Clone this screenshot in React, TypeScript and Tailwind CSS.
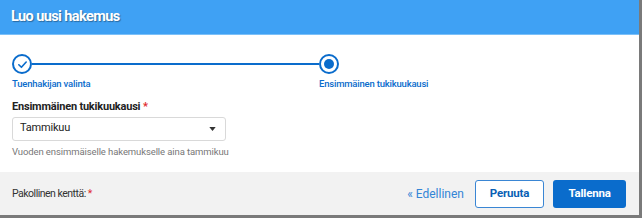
import React from "react"

const BLUE = "#0a6ccc"

function Step({ done }: { done?: boolean }) {
  return (
    <div className="h-[20px] w-[20px] rounded-full border-2 border-[#0a6ccc] bg-white grid place-items-center">
      {done ? (
        <svg viewBox="0 0 12 12" className="h-[11px] w-[11px]">
          <path d="M2 6.3 L4.8 9 L10 3.3" fill="none" stroke={BLUE} strokeWidth="1.8" strokeLinecap="round" strokeLinejoin="round" />
        </svg>
      ) : (
        <span className="h-[10px] w-[10px] rounded-full bg-[#0a6ccc]" />
      )}
    </div>
  )
}

export default function App() {
  return (
    <div className="w-[642px] h-[218px] bg-white flex flex-col border-r-[3px] border-b-[3px] border-[#7a7a7a] overflow-hidden font-['Roboto',sans-serif]">
      <div className="h-[35px] shrink-0 bg-[#3fa1f4] border-b border-[#7cc0f8] flex items-center px-[11px]">
        <h1 className="text-white text-[14.5px] font-bold tracking-[-0.6px] [text-shadow:1px_1px_1px_rgba(0,0,0,0.35)]">Luo uusi hakemus</h1>
      </div>

      <div className="flex-1 px-[12px] pt-[19px]">
        <div className="flex items-center w-[327px]">
          <Step done />
          <div className="flex-1 h-[2px] bg-[#0a6ccc]" />
          <Step />
        </div>
        <div className="flex mt-[5px] text-[9.5px] text-[#0a6ccc] font-medium tracking-[-0.2px] leading-none">
          <span className="w-[307px]">Tuenhakijan valinta</span>
          <span>Ensimmäinen tukikuukausi</span>
        </div>

        <div className="mt-[12px] text-[11px] font-bold text-[#222] tracking-[-0.2px] leading-none">
          Ensimmäinen tukikuukausi <span className="text-[#e0282e]">*</span>
        </div>
        <div className="mt-[5px] w-[214px] h-[24px] rounded-[3px] border border-[#d9d9d9] flex items-center justify-between px-[7px] text-[11px] text-[#222] tracking-[-0.2px]">
          <span>Tammikuu</span>
          <svg viewBox="0 0 8 5" className="w-[7px] h-[4px] mr-[2px]">
            <path d="M0 0 H8 L4 5 Z" fill="#333" />
          </svg>
        </div>
        <div className="mt-[6px] text-[9.5px] text-[#777] tracking-[-0.1px] leading-none">Vuoden ensimmäiselle hakemukselle aina tammikuu</div>
      </div>

      <div className="h-[43px] shrink-0 bg-[#f2f2f2] flex items-center px-[12px]">
        <span className="text-[10.5px] text-[#333] tracking-[-0.5px]">
          Pakollinen kenttä: <span className="text-[#e0282e]">*</span>
        </span>
        <div className="ml-auto flex items-center">
          <span className="text-[12px] text-[#3385d6] mr-[11px]">« Edellinen</span>
          <button className="h-[28px] w-[69px] rounded-[3px] border border-[#3a86d4] bg-white text-[11.5px] font-bold text-[#0a5fb4] tracking-[-0.2px] mr-[9px]">Peruuta</button>
          <button className="h-[28px] w-[73px] rounded-[3px] bg-[#0a6ccc] text-[11.5px] font-bold text-white tracking-[-0.2px] mr-[1px]">Tallenna</button>
        </div>
      </div>
    </div>
  )
}
